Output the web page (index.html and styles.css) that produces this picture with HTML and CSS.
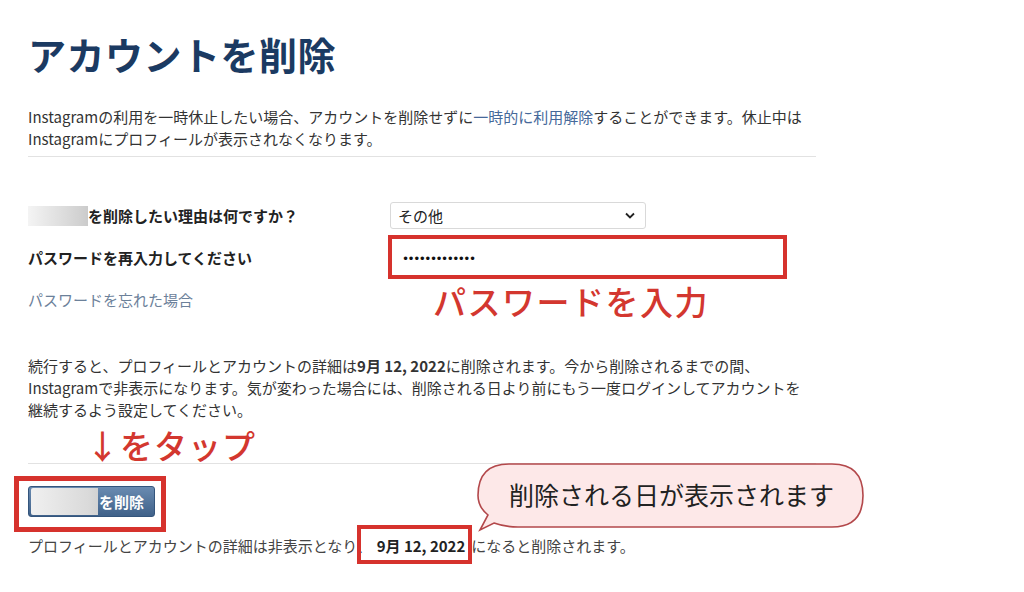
FILE: index.html
```html
<!DOCTYPE html>
<html lang="ja">
<head>
    <meta charset="UTF-8">
    <meta name="viewport" content="width=device-width, initial-scale=1.0">
    <title>アカウントを削除</title>
    <link rel="stylesheet" href="styles.css">
</head>
<body>
    <div class="page">
        <h1 class="title">アカウントを削除</h1>

        <p class="intro">Instagramの利用を一時休止したい場合、アカウントを削除せずに<a class="inline-link" href="#">一時的に利用解除</a>することができます。休止中はInstagramにプロフィールが表示されなくなります。</p>

        <div class="divider"></div>

        <div class="form">
            <div class="label"><span class="blur-name"></span>を削除したい理由は何ですか？</div>
            <div class="select">
                <span>その他</span>
                <svg class="chevron" width="10" height="7" viewBox="0 0 10 7">
                    <path d="M1 1.5 L5 5.5 L9 1.5" fill="none" stroke="#222" stroke-width="1.8"/>
                </svg>
            </div>

            <div class="label">パスワードを再入力してください</div>
            <div class="pw-wrap">
                <div class="pw-field"><span class="dots">•••••••••••••</span></div>
                <div class="note note-pw">パスワードを入力</div>
            </div>

            <a class="forgot" href="#">パスワードを忘れた場合</a>
        </div>

        <div class="notice">
            <p class="body-text">続行すると、プロフィールとアカウントの詳細は<b>9月 12, 2022</b>に削除されます。今から削除されるまでの間、Instagramで非表示になります。気が変わった場合には、削除される日より前にもう一度ログインしてアカウントを継続するよう設定してください。</p>
            <div class="note note-tap">↓をタップ</div>
        </div>

        <div class="divider divider-low"></div>

        <div class="action">
            <div class="btn-wrap">
                <button class="delete-btn"><span class="blur-btn"></span>を削除</button>
            </div>

            <div class="bubble">
                <svg class="bubble-shape" width="392" height="72" viewBox="0 0 392 72">
                    <path d="M33 2 H356 Q387 2 387 33.5 Q387 65 356 65 H42 Q29 65 18 61 L4 68 L12 53 Q2 45 2 33.5 Q2 2 33 2 Z"
                          fill="#fde8e8" stroke="#b3484b" stroke-width="1.6"/>
                </svg>
                <span class="bubble-text">削除される日が表示されます</span>
            </div>
        </div>

        <p class="final">プロフィールとアカウントの詳細は非表示となり、<b class="date-mark">9月 12, 2022</b>になると削除されます。</p>
    </div>
</body>
</html>
```

FILE: styles.css
```css
body {
    margin: 0;
    background: #fff;
    color: #333;
    font-family: "Noto Sans CJK JP", "Noto Sans", sans-serif;
    font-size: 15px;
}

.page {
    position: relative;
    width: 788px;
    padding: 26px 0 40px 28px;
}

.title {
    margin: 0;
    font-size: 38px;
    line-height: 56px;
    font-weight: 700;
    color: #1b3a62;
    letter-spacing: 0.5px;
}

.intro,
.body-text,
.final {
    margin: 0;
    line-height: 22px;
}

.intro {
    margin-top: 24px;
    width: 780px;
}

.inline-link {
    color: #46699a;
    text-decoration: none;
}

.divider {
    margin-top: 6px;
    border-top: 1px solid #e2e2e2;
}

.form {
    display: grid;
    grid-template-columns: 362px 400px;
    align-items: center;
    row-gap: 6px;
    margin-top: 45px;
}

.label {
    font-weight: 700;
    color: #222;
    display: flex;
    align-items: center;
}

.blur-name {
    display: inline-block;
    width: 60px;
    height: 20px;
    background: linear-gradient(90deg, #f4f4f4, #d2d2d2 85%, #cbcbcb);
    filter: blur(0.6px);
}

.select {
    width: 256px;
    height: 27px;
    box-sizing: border-box;
    border: 1px solid #d9d9d9;
    border-radius: 3px;
    display: flex;
    align-items: center;
    justify-content: space-between;
    padding: 0 10px 0 7px;
    color: #222;
}

.chevron {
    display: block;
}

.pw-wrap {
    position: relative;
    margin-left: -2px;
}

.pw-field {
    width: 399px;
    height: 44px;
    box-sizing: border-box;
    border: 4px solid #d6322d;
    background: #fff;
    display: flex;
    align-items: flex-end;
    padding: 0 0 10px 10px;
}

.dots {
    font-family: "DejaVu Sans", sans-serif;
    font-size: 12px;
    line-height: 12px;
    letter-spacing: -1.5px;
    color: #111;
}

.note {
    position: absolute;
    color: #d3372f;
    font-weight: 500;
    white-space: nowrap;
}

.note-pw {
    left: 45px;
    top: 46px;
    font-size: 33px;
    line-height: 40px;
    letter-spacing: 1.5px;
}

.forgot {
    grid-column: 1;
    margin-top: 4px;
    line-height: 22px;
    color: #6c819a;
    text-decoration: none;
}

.notice {
    position: relative;
    margin-top: 44px;
}

.body-text {
    width: 780px;
}

.note-tap {
    left: 58px;
    top: 70px;
    font-size: 33px;
    line-height: 40px;
    letter-spacing: 1px;
}

.divider-low {
    margin-top: 42px;
}

.action {
    position: relative;
    margin-top: 22px;
}

.btn-wrap {
    position: relative;
    display: inline-block;
}

.btn-wrap::before {
    content: "";
    position: absolute;
    left: -14px;
    right: -11px;
    top: -10px;
    bottom: -15px;
    border: 5px solid #d6322d;
}

.delete-btn {
    display: flex;
    align-items: center;
    width: 127px;
    height: 31px;
    padding: 0 0 0 2px;
    border: 1px solid #34557c;
    border-radius: 3px;
    background: linear-gradient(180deg, #6a8bb1, #3f6189);
    color: #fff;
    font-family: inherit;
    font-size: 15px;
    font-weight: 700;
}

.blur-btn {
    display: inline-block;
    width: 67px;
    height: 27px;
    margin-right: 1px;
    background: linear-gradient(90deg, #f0f0f0, #dadada 85%, #d2d2d2);
    border-radius: 2px 0 0 2px;
}

.bubble {
    position: absolute;
    left: 448px;
    top: -24px;
    width: 392px;
    height: 72px;
}

.bubble-shape {
    position: absolute;
    left: 0;
    top: 0;
}

.bubble-text {
    position: absolute;
    left: 33px;
    top: 15px;
    font-size: 25px;
    line-height: 34px;
    color: #222;
    white-space: nowrap;
}

.final {
    margin-top: 16px;
    color: #444;
}

.date-mark {
    position: relative;
    color: #222;
    margin: 0 6px 0 5px;
}

.date-mark::after {
    content: "";
    position: absolute;
    left: -20px;
    right: -7px;
    top: -10px;
    bottom: -8px;
    border: 4px solid #d6322d;
    background: transparent;
}
```
